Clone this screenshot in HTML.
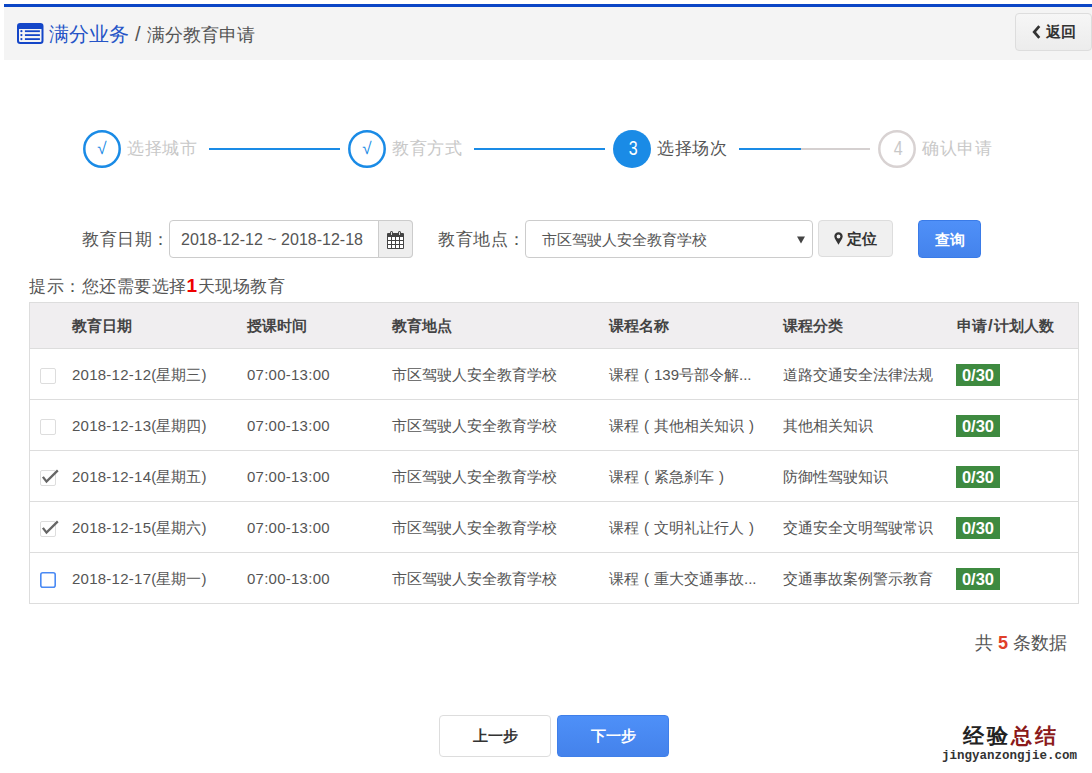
<!DOCTYPE html>
<html><head><meta charset="utf-8">
<style>
*{box-sizing:border-box;margin:0;padding:0}
html,body{width:1092px;height:773px;overflow:hidden;background:#fff;font-family:"Liberation Sans",sans-serif;color:#555}
.abs{position:absolute}
#topbar{left:4px;top:4px;width:1088px;height:3px;background:#0b46c6}
#hdr{left:4px;top:7px;width:1088px;height:53px;background:#f4f4f4}
#crumb{left:49px;top:21px;font-size:18px;line-height:26px;color:#555;white-space:nowrap}
#crumb .b{color:#2554c7;font-size:20px}
#back{left:1015px;top:13px;width:77px;height:38px;border:1px solid #ddd;border-radius:4px;background:linear-gradient(#f6f6f6,#ececec);font-size:15px;font-weight:bold;color:#333;line-height:36px;padding-left:16px;white-space:nowrap}
.ck{width:38px;top:130px;height:38px;text-align:center;line-height:38px;font-size:17px;color:#1a8be6}
.num{width:38px;top:129px;height:38px;text-align:center;line-height:38px;font-size:19.5px;transform:translateX(1.3px) scaleX(0.82)}
.stxt{top:137px;font-size:17px;letter-spacing:0.5px;line-height:24px;color:#c8c8c8;white-space:nowrap}
.line{top:148px;height:2px;background:#1a8be6}
.lbl{font-size:17px;letter-spacing:0.5px;line-height:24px;color:#555;white-space:nowrap;margin-top:1px}
#date{left:169px;top:220px;width:244px;height:38px;border:1px solid #ccc;border-radius:4px;font-size:16px;line-height:37px;padding-left:11px;color:#555;white-space:nowrap}
#cal{left:378px;top:220px;width:35px;height:38px;border:1px solid #ccc;border-radius:0 4px 4px 0;background:#eee}
#sel{left:525px;top:220px;width:288px;height:38px;border:1px solid #ccc;border-radius:4px;font-size:15px;line-height:37px;padding-left:16px;color:#555;white-space:nowrap}
#loc{left:818px;top:220px;width:75px;height:37px;border:1px solid #ddd;border-radius:4px;background:#f0f0f0;font-size:15px;font-weight:bold;color:#333;line-height:36px;padding-left:15px;white-space:nowrap}
#query{left:918px;top:220px;width:63px;height:38px;border:1px solid #3a7be8;border-radius:4px;background:linear-gradient(#4f90f8,#4483ec);font-size:15px;font-weight:bold;color:#fff;line-height:37px;text-align:center}
#hint{left:29px;top:274px;font-size:17px;letter-spacing:0.5px;line-height:24px;color:#555;white-space:nowrap}
#hint b{color:#e00;font-size:19px}
#tbl{left:29px;top:302px;width:1050px;height:302px;border:1px solid #ddd;border-bottom:1px solid #ddd}
#thead{left:0;top:0;width:1048px;height:46px;background:#f0eef0;border-bottom:1px solid #ddd}
.th{top:12px;font-size:15px;font-weight:bold;color:#444;line-height:22px;white-space:nowrap}
.row{left:0;width:1048px;height:51px;border-bottom:1px solid #ddd}
.td{top:15px;font-size:15px;line-height:22px;color:#555;white-space:nowrap}
.cb{left:10px;top:19px;width:16px;height:16px;border:1px solid #ddd;border-radius:2px;background:#fff}
.pp{display:inline-block;width:1em;text-align:center}
.dg{letter-spacing:0.25px}
.badge{left:926px;top:15px;width:44px;height:22px;background:#3e8a40;color:#fff;font-size:16.5px;font-weight:bold;line-height:22px;text-align:center}
#total{left:975px;top:631px;font-size:18px;line-height:24px;color:#555;white-space:nowrap}
#total b{color:#e0402a}
#prev{left:439px;top:715px;width:112px;height:42px;border:1px solid #ddd;border-radius:4px;background:#fff;font-size:15px;font-weight:bold;color:#333;line-height:40px;text-align:center}
#next{left:557px;top:715px;width:112px;height:42px;border:1px solid #3f7fe9;border-radius:4px;background:linear-gradient(#4e90f8,#4482eb);font-size:15px;font-weight:bold;color:#fff;line-height:39px;text-align:center}
#wm1{left:963px;top:722px;font-size:21px;font-weight:bold;line-height:28px;color:#222;letter-spacing:3px;white-space:nowrap}
#wm1 span{color:#8b1a1a}
#wm2{left:942px;top:748px;font-size:12.5px;font-weight:bold;line-height:16px;color:#333;font-family:"Liberation Mono",monospace;white-space:nowrap}
</style></head><body>
<div class="abs" id="topbar"></div>
<div class="abs" id="hdr"></div>
<svg class="abs" style="left:17px;top:23px" width="27" height="21" viewBox="0 0 27 21">
<rect x="1" y="1" width="24.5" height="19" rx="2.2" fill="none" stroke="#1446c8" stroke-width="2"/>
<rect x="1" y="1" width="24.5" height="5" rx="1" fill="#1446c8"/>
<circle cx="4.4" cy="8.2" r="1.1" fill="#1446c8"/><circle cx="4.4" cy="12.1" r="1.1" fill="#1446c8"/><circle cx="4.4" cy="16.1" r="1.1" fill="#1446c8"/>
<rect x="7.9" y="7.3" width="15" height="1.8" fill="#1446c8"/><rect x="7.9" y="11.2" width="15" height="1.8" fill="#1446c8"/><rect x="7.9" y="15.2" width="15" height="1.8" fill="#1446c8"/>
</svg>
<div class="abs" id="crumb"><span class="b">满分业务</span><span style="margin:0 6px 0 6px;font-size:20px">/</span>满分教育申请</div>
<div class="abs" id="back"><svg width="9" height="14" viewBox="0 0 9 14" style="vertical-align:-2px;margin-right:5px"><path d="M7.3 1.2 L2.2 7 L7.3 12.8" fill="none" stroke="#333" stroke-width="2.7"/></svg>返回</div>

<svg class="abs" style="left:83px;top:130px" width="38" height="38"><circle cx="19" cy="19" r="17.7" fill="none" stroke="#1a8be6" stroke-width="2.5"/></svg>
<div class="abs ck" style="left:83px">√</div>
<div class="abs stxt" style="left:127px">选择城市</div>
<div class="abs line" style="left:209px;width:131px"></div>
<svg class="abs" style="left:348px;top:130px" width="38" height="38"><circle cx="19" cy="19" r="17.7" fill="none" stroke="#1a8be6" stroke-width="2.5"/></svg>
<div class="abs ck" style="left:348px">√</div>
<div class="abs stxt" style="left:392px">教育方式</div>
<div class="abs line" style="left:474px;width:131px"></div>
<svg class="abs" style="left:613px;top:130px" width="38" height="38"><circle cx="19" cy="19" r="19" fill="#1a8be6"/></svg>
<div class="abs num" style="left:613px;color:#fff">3</div>
<div class="abs stxt" style="left:657px;color:#555">选择场次</div>
<div class="abs line" style="left:739px;width:62px"></div>
<div class="abs line" style="left:801px;width:69px;background:#d5d0d0"></div>
<svg class="abs" style="left:878px;top:130px" width="38" height="38"><circle cx="19" cy="19" r="17.7" fill="none" stroke="#d8d2d2" stroke-width="2.5"/></svg>
<div class="abs num" style="left:878px;color:#c8c8c8">4</div>
<div class="abs stxt" style="left:922px">确认申请</div>

<div class="abs lbl" style="left:82px;top:227px">教育日期：</div>
<div class="abs" id="date">2018-12-12 ~ 2018-12-18</div>
<div class="abs" id="cal"></div>
<svg class="abs" style="left:387px;top:231px" width="17" height="18" viewBox="0 0 17 18">
<rect x="0" y="2" width="17" height="16" rx="1" fill="#444"/>
<rect x="1" y="6" width="3" height="3" fill="#fff"/><rect x="5" y="6" width="3" height="3" fill="#fff"/><rect x="9" y="6" width="3" height="3" fill="#fff"/><rect x="13" y="6" width="3" height="3" fill="#fff"/>
<rect x="1" y="10" width="3" height="3" fill="#fff"/><rect x="5" y="10" width="3" height="3" fill="#fff"/><rect x="9" y="10" width="3" height="3" fill="#fff"/><rect x="13" y="10" width="3" height="3" fill="#fff"/>
<rect x="1" y="14" width="3" height="3" fill="#fff"/><rect x="5" y="14" width="3" height="3" fill="#fff"/><rect x="9" y="14" width="3" height="3" fill="#fff"/><rect x="13" y="14" width="3" height="3" fill="#fff"/>
<rect x="3" y="0" width="3" height="5" rx="1.5" fill="#444"/><rect x="11" y="0" width="3" height="5" rx="1.5" fill="#444"/>
<rect x="4" y="1" width="1" height="3" fill="#ddd"/><rect x="12" y="1" width="1" height="3" fill="#ddd"/>
</svg>
<div class="abs lbl" style="left:438px;top:227px">教育地点：</div>
<div class="abs" id="sel">市区驾驶人安全教育学校<svg class="abs" style="left:271px;top:15px" width="8" height="8" viewBox="0 0 8 8"><path d="M0 0.5 H8 L4 7.5 Z" fill="#444"/></svg></div>
<div class="abs" id="loc"><svg width="9" height="13" viewBox="0 0 9 13" style="vertical-align:-1px;margin-right:4px"><path d="M4.5 0.3 C2 0.3 0.3 2.1 0.3 4.4 C0.3 6.6 3 9.5 4.5 12.8 C6 9.5 8.7 6.6 8.7 4.4 C8.7 2.1 7 0.3 4.5 0.3 Z M4.5 2.6 A1.9 1.9 0 1 1 4.5 6.4 A1.9 1.9 0 1 1 4.5 2.6 Z" fill="#333" fill-rule="evenodd"/></svg>定位</div>
<div class="abs" id="query">查询</div>

<div class="abs" id="hint">提示：您还需要选择<b>1</b>天现场教育</div>

<div class="abs" id="tbl">
 <div class="abs" id="thead">
  <div class="abs th" style="left:42px">教育日期</div>
  <div class="abs th" style="left:217px">授课时间</div>
  <div class="abs th" style="left:362px">教育地点</div>
  <div class="abs th" style="left:579px">课程名称</div>
  <div class="abs th" style="left:753px">课程分类</div>
  <div class="abs th" style="left:927px">申请<span style="font-size:17px;margin:0 1px 0 1px">/</span>计划人数</div>
 </div>
 <div class="abs row" style="top:46px">
  <div class="abs cb"></div>
  <div class="abs td" style="left:42px"><span class="dg">2018-12-12(</span>星期三)</div>
  <div class="abs td" style="left:217px"><span class="dg">07:00-13:00</span></div>
  <div class="abs td" style="left:362px">市区驾驶人安全教育学校</div>
  <div class="abs td" style="left:579px">课程<span class="pp">(</span>139号部令解...</div>
  <div class="abs td" style="left:753px">道路交通安全法律法规</div>
  <div class="abs badge">0/30</div>
 </div>
 <div class="abs row" style="top:97px">
  <div class="abs cb"></div>
  <div class="abs td" style="left:42px"><span class="dg">2018-12-13(</span>星期四)</div>
  <div class="abs td" style="left:217px"><span class="dg">07:00-13:00</span></div>
  <div class="abs td" style="left:362px">市区驾驶人安全教育学校</div>
  <div class="abs td" style="left:579px">课程<span class="pp">(</span>其他相关知识<span class="pp">)</span></div>
  <div class="abs td" style="left:753px">其他相关知识</div>
  <div class="abs badge">0/30</div>
 </div>
 <div class="abs row" style="top:148px">
  <div class="abs cb"></div><svg class="abs" style="left:11px;top:17px" width="20" height="17" viewBox="0 0 20 17"><path d="M1.9 8.9 L5.5 13.6 L16.8 2.4" fill="none" stroke="#666" stroke-width="2.3" stroke-linejoin="miter"/></svg>
  <div class="abs td" style="left:42px"><span class="dg">2018-12-14(</span>星期五)</div>
  <div class="abs td" style="left:217px"><span class="dg">07:00-13:00</span></div>
  <div class="abs td" style="left:362px">市区驾驶人安全教育学校</div>
  <div class="abs td" style="left:579px">课程<span class="pp">(</span>紧急刹车<span class="pp">)</span></div>
  <div class="abs td" style="left:753px">防御性驾驶知识</div>
  <div class="abs badge">0/30</div>
 </div>
 <div class="abs row" style="top:199px">
  <div class="abs cb"></div><svg class="abs" style="left:11px;top:17px" width="20" height="17" viewBox="0 0 20 17"><path d="M1.9 8.9 L5.5 13.6 L16.8 2.4" fill="none" stroke="#666" stroke-width="2.3" stroke-linejoin="miter"/></svg>
  <div class="abs td" style="left:42px"><span class="dg">2018-12-15(</span>星期六)</div>
  <div class="abs td" style="left:217px"><span class="dg">07:00-13:00</span></div>
  <div class="abs td" style="left:362px">市区驾驶人安全教育学校</div>
  <div class="abs td" style="left:579px">课程<span class="pp">(</span>文明礼让行人<span class="pp">)</span></div>
  <div class="abs td" style="left:753px">交通安全文明驾驶常识</div>
  <div class="abs badge">0/30</div>
 </div>
 <div class="abs row" style="top:250px;border-bottom:none">
  <svg class="abs" style="left:10px;top:19px" width="16" height="16"><rect x="0.8" y="0.8" width="14.4" height="14.4" rx="2" fill="#fff" stroke="#4a8af4" stroke-width="1.6"/></svg>
  <div class="abs td" style="left:42px"><span class="dg">2018-12-17(</span>星期一)</div>
  <div class="abs td" style="left:217px"><span class="dg">07:00-13:00</span></div>
  <div class="abs td" style="left:362px">市区驾驶人安全教育学校</div>
  <div class="abs td" style="left:579px">课程<span class="pp">(</span>重大交通事故...</div>
  <div class="abs td" style="left:753px">交通事故案例警示教育</div>
  <div class="abs badge">0/30</div>
 </div>
</div>

<div class="abs" id="total">共 <b>5</b> 条数据</div>
<div class="abs" id="prev">上一步</div>
<div class="abs" id="next">下一步</div>
<div class="abs" id="wm1">经验<span>总结</span></div>
<div class="abs" id="wm2">jingyanzongjie.com</div>
</body></html>
